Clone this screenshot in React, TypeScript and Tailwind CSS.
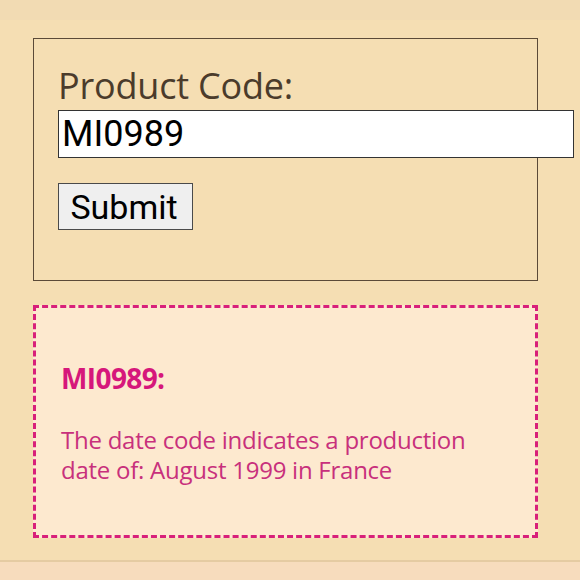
import React from "react";

export default function App() {
  return (
    <div className="w-[580px] h-[580px] overflow-hidden bg-[#f5deb3] flex flex-col font-['Open_Sans',sans-serif]">
      <div className="h-[20px] bg-[#f2dbb3]"></div>
      <div className="flex-1 flex flex-col px-[33px] pt-[18px] gap-[24px]">
        <form
          className="w-[505px] h-[243px] border border-[#5b4a38] pl-[24px] pt-[26px] flex flex-col"
          onSubmit={(e) => e.preventDefault()}
        >
          <label className="text-[36px] leading-[42px] text-[#4b3b2b] tracking-[-0.2px]">Product Code:</label>
          <input
            defaultValue="MI0989"
            className="mt-[3px] w-[516px] h-[48px] bg-white border-[1.5px] border-[#333] px-[3px] text-[36px] text-black font-['Roboto',sans-serif] outline-none"
          />
          <button
            type="submit"
            className="mt-[25px] w-[135px] h-[47px] bg-[#efefef] border-[1.5px] border-[#4a4a4a] text-[34px] leading-none text-black font-['Roboto',sans-serif] pr-[3px]"
          >
            Submit
          </button>
        </form>
        <div className="w-[505px] h-[233px] border-[3px] border-dashed border-[#d8207a] bg-[#fde9cf] pl-[25px] pt-[54px]">
          <h2 className="text-[28px] leading-[32px] font-bold text-[#d6177b] tracking-[-0.6px]">MI0989:</h2>
          <p className="mt-[31px] w-[440px] text-[24px] leading-[30px] text-[#c8307c] tracking-[-0.25px]">
            The date code indicates a production date of: August 1999 in France
          </p>
        </div>
      </div>
      <div className="h-[20px] border-t-2 border-[#e5cba2] bg-[#f7dcbd]"></div>
    </div>
  );
}
